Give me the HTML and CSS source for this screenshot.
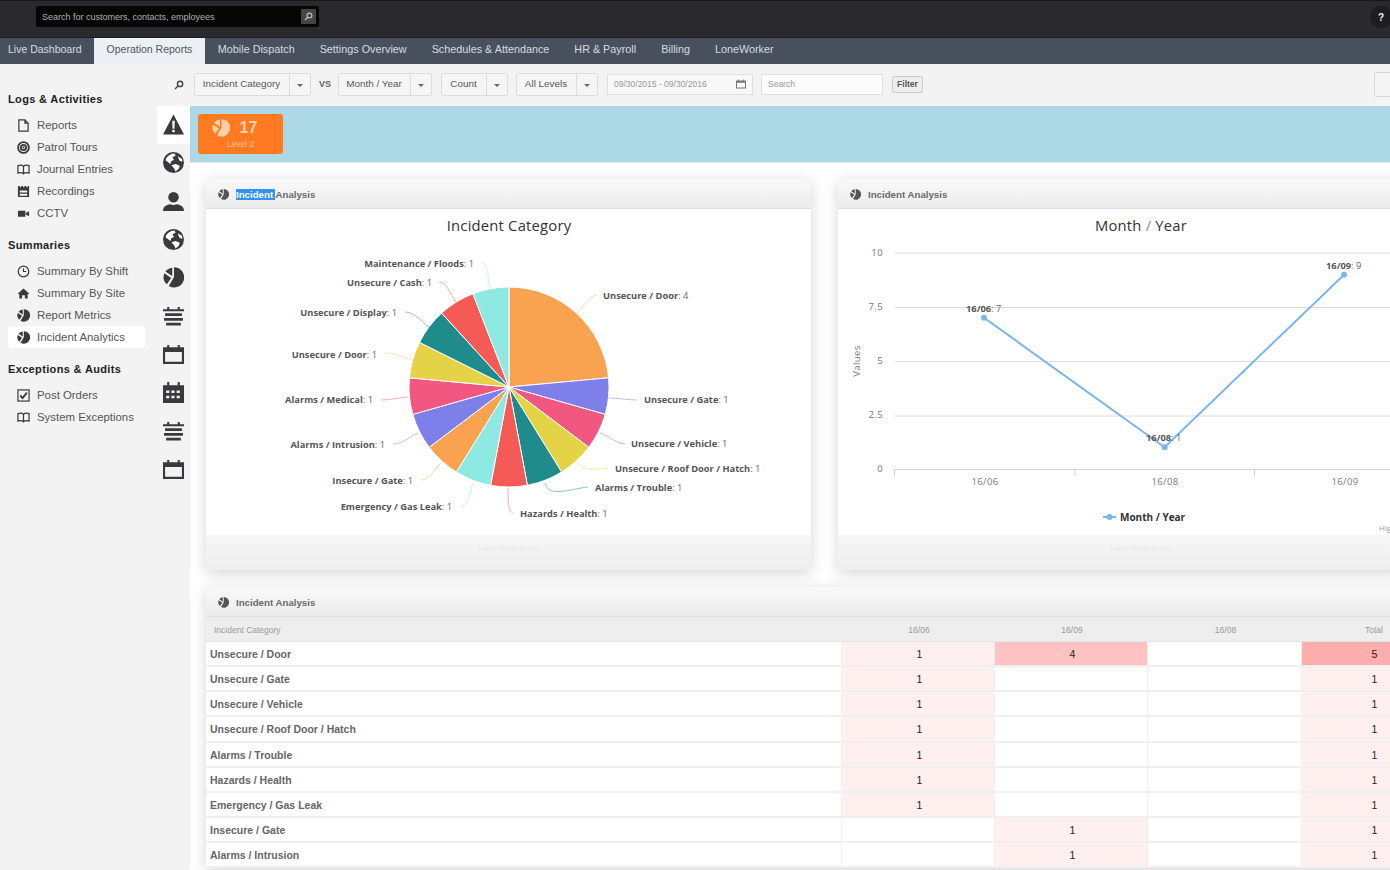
FILE: index.html
```html
<!DOCTYPE html>
<html lang="en">
<head>
<meta charset="utf-8">
<title>Incident Analytics</title>
<link rel="stylesheet" href="styles.css">
</head>
<body>
<svg class="defs" width="0" height="0" aria-hidden="true">
  <symbol id="i-warn" viewBox="0 0 20 20"><path d="M10 .5 20 19.5H0Z"/><path class="cut" d="M8.8 6.5h2.4l-.3 7.5H9.1Z"/><circle class="cut" cx="10" cy="16.2" r="1.3"/></symbol>
  <symbol id="i-globe" viewBox="0 0 20 20"><circle cx="10" cy="10" r="10"/><path class="cut" d="M3 6c2-3 5-4.500 8-4.500l1 2-3 1.500 1.500 2.500-2.500 1-1 3-3-2.500-1.500-1Zm5 6.500 4-1 4 1.500-1 3-3 2.500-1.500-3ZM14 4l4 2.500 .5 3-3-1.500Z"/></symbol>
  <symbol id="i-user" viewBox="0 0 20 20"><circle cx="10" cy="6" r="5"/><path d="M0 19c0-4.500 3.500-6 7-6.500 2 1 4 1 6 0 3.500 .5 7 2 7 6.500Z"/></symbol>
  <symbol id="i-pie" viewBox="0 0 20 20"><path d="M10.500 9.500V.2a9.700 9.700 0 1 1-5 18Z"/><path d="M8.800 8.500V.6A9 9 0 0 0 2.300 4.300Z"/><path d="M7.800 10.500 1.300 6A9.300 9.300 0 0 0 3.700 16.500Z"/></symbol>
  <symbol id="i-stack" viewBox="0 0 20 20"><path d="M4 1h2v2h8V1h2v2h4v2H0V3h4ZM2 7h16v2.500H2ZM1 11.500h18V14H1ZM3 16h14v2.500H3Z"/></symbol>
  <symbol id="i-cal" viewBox="0 0 20 20"><path fill-rule="evenodd" d="M4 1h2v2h8V1h2v2h4v16H0V3h4ZM2 7.500V17h16V7.500Z"/></symbol>
  <symbol id="i-calf" viewBox="0 0 20 20"><path fill-rule="evenodd" d="M4 0h2v3h8V0h2v3h4v17H0V3h4ZM3 8v2.500h3V8Zm5 0v2.500h3V8Zm5 0v2.500h3V8ZM3 13v2.500h3V13Zm5 0v2.500h3V13Zm5 0v2.500h3V13Z"/></symbol>
  <symbol id="i-doc" viewBox="0 0 14 14"><path class="ln" d="M2 1h6.500L12 4.500V13H2Z M8.500 1v3.500H12"/></symbol>
  <symbol id="i-target" viewBox="0 0 14 14"><circle class="ln ln-b" cx="7" cy="7" r="5.800"/><circle class="ln ln-b" cx="7" cy="7" r="2.800"/><circle cx="7" cy="7" r="1"/></symbol>
  <symbol id="i-book" viewBox="0 0 14 14"><path class="ln" d="M7 3.500C6 2.500 3 2 1 2.800V11c2-.7 5-.3 6 .7 1-1 4-1.400 6-.7V2.800C11 2 8 2.500 7 3.500Zm0 0v8"/></symbol>
  <symbol id="i-film" viewBox="0 0 14 14"><path fill-rule="evenodd" d="M1 1h2v1.500h1.500V1h2v1.500H8V1h2v1.500h1.500V1H13v12H1ZM3 6v2h8V6Zm0 3.500V11.500h8V9.500Z"/></symbol>
  <symbol id="i-cam" viewBox="0 0 14 14"><path d="M1 4h8v6.500H1ZM9.500 6.500 13 4.500v5.500L9.500 8Z"/></symbol>
  <symbol id="i-clock" viewBox="0 0 14 14"><circle class="ln" cx="7" cy="7" r="5.700"/><path class="ln" d="M7 3.500V7h3"/></symbol>
  <symbol id="i-home" viewBox="0 0 14 14"><path d="M7 1.500 13.500 7.500H11.500V12.500H8.500V9H5.500V12.500H2.500V7.500H.5Z"/></symbol>
  <symbol id="i-check" viewBox="0 0 14 14"><rect class="ln" x="1" y="1" width="12" height="12"/><path class="ln ln-b" d="M3.500 7 6 9.700 10.700 4"/></symbol>
  <symbol id="i-search" viewBox="0 0 14 14"><circle class="ln ln-b" cx="8.500" cy="5.500" r="3.700"/><path class="ln ln-b" d="M5.500 8.500 1.500 12.500"/></symbol>
</svg>

<header class="topbar">
  <div class="searchbox">
    <span class="searchbox-text">Search for customers, contacts, employees</span>
    <span class="searchbox-btn"><svg class="ic-xs"><use href="#i-search"/></svg></span>
  </div>
  <span class="help">?</span>
</header>

<nav class="nav">
  <a class="tab tab-first">Live Dashboard</a>
  <a class="tab tab-active">Operation Reports</a>
  <a class="tab">Mobile Dispatch</a>
  <a class="tab">Settings Overview</a>
  <a class="tab">Schedules &amp; Attendance</a>
  <a class="tab">HR &amp; Payroll</a>
  <a class="tab">Billing</a>
  <a class="tab">LoneWorker</a>
</nav>

<div class="layout">
  <aside class="sidebar">
    <h3 class="side-h side-h-first">Logs &amp; Activities</h3>
    <a class="side-i"><svg class="ic-s"><use href="#i-doc"/></svg>Reports</a>
    <a class="side-i"><svg class="ic-s"><use href="#i-target"/></svg>Patrol Tours</a>
    <a class="side-i"><svg class="ic-s"><use href="#i-book"/></svg>Journal Entries</a>
    <a class="side-i"><svg class="ic-s"><use href="#i-film"/></svg>Recordings</a>
    <a class="side-i"><svg class="ic-s"><use href="#i-cam"/></svg>CCTV</a>
    <h3 class="side-h">Summaries</h3>
    <a class="side-i"><svg class="ic-s"><use href="#i-clock"/></svg>Summary By Shift</a>
    <a class="side-i"><svg class="ic-s"><use href="#i-home"/></svg>Summary By Site</a>
    <a class="side-i"><svg class="ic-s"><use href="#i-pie"/></svg>Report Metrics</a>
    <a class="side-i side-i-active"><svg class="ic-s"><use href="#i-pie"/></svg>Incident Analytics</a>
    <h3 class="side-h">Exceptions &amp; Audits</h3>
    <a class="side-i"><svg class="ic-s"><use href="#i-check"/></svg>Post Orders</a>
    <a class="side-i"><svg class="ic-s"><use href="#i-book"/></svg>System Exceptions</a>
  </aside>

  <div class="rail">
    <div class="rail-top"><svg class="ic-xs"><use href="#i-search"/></svg></div>
    <div class="rail-i rail-i-active"><svg class="ic-l"><use href="#i-warn"/></svg></div>
    <div class="rail-i"><svg class="ic-l"><use href="#i-globe"/></svg></div>
    <div class="rail-i"><svg class="ic-l"><use href="#i-user"/></svg></div>
    <div class="rail-i"><svg class="ic-l"><use href="#i-globe"/></svg></div>
    <div class="rail-i"><svg class="ic-l"><use href="#i-pie"/></svg></div>
    <div class="rail-i"><svg class="ic-l"><use href="#i-stack"/></svg></div>
    <div class="rail-i"><svg class="ic-l"><use href="#i-cal"/></svg></div>
    <div class="rail-i"><svg class="ic-l"><use href="#i-calf"/></svg></div>
    <div class="rail-i"><svg class="ic-l"><use href="#i-stack"/></svg></div>
    <div class="rail-i"><svg class="ic-l"><use href="#i-cal"/></svg></div>
  </div>

  <main class="main">
    <div class="toolbar">
      <div class="sel sel-a"><span class="sel-l">Incident Category</span><span class="sel-c"></span></div>
      <span class="vs">VS</span>
      <div class="sel sel-b"><span class="sel-l">Month / Year</span><span class="sel-c"></span></div>
      <div class="sel sel-c1"><span class="sel-l">Count</span><span class="sel-c"></span></div>
      <div class="sel sel-d"><span class="sel-l">All Levels</span><span class="sel-c"></span></div>
      <div class="field field-date"><span>09/30/2015 - 09/30/2016</span><svg class="ic-xs ic-mid"><use href="#i-cal"/></svg></div>
      <div class="field field-search"><span>Search</span></div>
      <div class="btn-filter">Filter</div>
      <div class="btn-right"></div>
    </div>

    <div class="band">
      <div class="tile">
        <div class="tile-top"><svg class="ic-tile"><use href="#i-pie"/></svg><span class="tile-n">17</span></div>
        <div class="tile-l">Level 2</div>
      </div>
    </div>

    <div class="content">
      <div class="charts">
        <section class="panel">
          <div class="panel-h"><svg class="ic-p"><use href="#i-pie"/></svg><span><span class="sel-text">Incident </span>Analysis</span></div>
          <svg class="chart" viewBox="206 209 605 326">
            <text class="c-title" x="509" y="231" text-anchor="middle">Incident Category</text>
            <g class="pie">
              <path fill="#f9a350" d="M509 387V287A100 100 0 0 1 608.6 377.8Z"/>
              <path fill="#7f7fea" d="M509 387 608.6 377.800A100 100 0 0 1 605.2 414.400Z"/>
              <path fill="#f15780" d="M509 387 605.200 414.400A100 100 0 0 1 588.800 447.300Z"/>
              <path fill="#e4d344" d="M509 387 588.800 447.300A100 100 0 0 1 561.600 472Z"/>
              <path fill="#1f8b8b" d="M509 387 561.600 472A100 100 0 0 1 527.400 485.300Z"/>
              <path fill="#f65a56" d="M509 387 527.400 485.300A100 100 0 0 1 490.600 485.300Z"/>
              <path fill="#8de9e1" d="M509 387 490.600 485.300A100 100 0 0 1 456.400 472Z"/>
              <path fill="#f9a350" d="M509 387 456.400 472A100 100 0 0 1 429.200 447.300Z"/>
              <path fill="#7f7fea" d="M509 387 429.200 447.300A100 100 0 0 1 412.800 414.400Z"/>
              <path fill="#f15780" d="M509 387 412.800 414.400A100 100 0 0 1 409.400 377.800Z"/>
              <path fill="#e4d344" d="M509 387 409.400 377.800A100 100 0 0 1 419.500 342.400Z"/>
              <path fill="#1f8b8b" d="M509 387 419.500 342.400A100 100 0 0 1 441.600 313.100Z"/>
              <path fill="#f65a56" d="M509 387 441.600 313.100A100 100 0 0 1 472.900 293.800Z"/>
              <path fill="#8de9e1" d="M509 387 472.900 293.800A100 100 0 0 1 509 287Z"/>
            </g>
            <g class="conn">
              <path stroke="#fcd3ab" d="M577 313C585 304 590 296 597 295"/>
              <path stroke="#bfbff4" d="M609 398C618 398 628 400 637 400"/>
              <path stroke="#f8abc0" d="M600 433C610 436 616 444 625 444"/>
              <path stroke="#f1e9a1" d="M577 463C584 472 596 469 608 468"/>
              <path stroke="#8fc5c5" d="M545 483C548 498 570 489 588 487"/>
              <path stroke="#faacaa" d="M508 488C508 500 508 512 513 513"/>
              <path stroke="#c6f4f0" d="M473 483C470 492 468 506 461 506"/>
              <path stroke="#fcd3ab" d="M441 463C434 470 429 480 421 480"/>
              <path stroke="#bfbff4" d="M418 433C409 437 402 444 393 444"/>
              <path stroke="#f8abc0" d="M408 397C398 398 390 400 381 400"/>
              <path stroke="#f1e9a1" d="M412 360C403 357 394 353 385 353"/>
              <path stroke="#8fc5c5" d="M428 327C421 320 413 312 405 312"/>
              <path stroke="#faacaa" d="M456 302C450 293 446 282 439 282"/>
              <path stroke="#c6f4f0" d="M490 289C488 280 488 263 482 263"/>
            </g>
            <g class="plabels">
              <text x="474" y="267" text-anchor="end"><tspan class="b">Maintenance / Floods</tspan>: 1</text>
              <text x="432" y="286" text-anchor="end"><tspan class="b">Unsecure / Cash</tspan>: 1</text>
              <text x="397" y="316" text-anchor="end"><tspan class="b">Unsecure / Display</tspan>: 1</text>
              <text x="377" y="358" text-anchor="end"><tspan class="b">Unsecure / Door</tspan>: 1</text>
              <text x="373" y="403" text-anchor="end"><tspan class="b">Alarms / Medical</tspan>: 1</text>
              <text x="385" y="448" text-anchor="end"><tspan class="b">Alarms / Intrusion</tspan>: 1</text>
              <text x="413" y="484" text-anchor="end"><tspan class="b">Insecure / Gate</tspan>: 1</text>
              <text x="452" y="510" text-anchor="end"><tspan class="b">Emergency / Gas Leak</tspan>: 1</text>
              <text x="520" y="517"><tspan class="b">Hazards / Health</tspan>: 1</text>
              <text x="595" y="491"><tspan class="b">Alarms / Trouble</tspan>: 1</text>
              <text x="615" y="472"><tspan class="b">Unsecure / Roof Door / Hatch</tspan>: 1</text>
              <text x="631" y="447"><tspan class="b">Unsecure / Vehicle</tspan>: 1</text>
              <text x="644" y="403"><tspan class="b">Unsecure / Gate</tspan>: 1</text>
              <text x="603" y="299"><tspan class="b">Unsecure / Door</tspan>: 4</text>
            </g>
          </svg>
          <div class="panel-f">Load Time: 0 sec</div>
        </section>

        <section class="panel">
          <div class="panel-h"><svg class="ic-p"><use href="#i-pie"/></svg><span>Incident Analysis</span></div>
          <svg class="chart" viewBox="838 209 605 326">
            <text class="c-title" x="1141" y="231" text-anchor="middle">Month <tspan class="slash">/</tspan> Year</text>
            <g class="grid">
              <path d="M895 253H1443M895 307.500H1443M895 361.500H1443M895 416H1443"/>
            </g>
            <path class="axis" d="M894 469.500H1435M894.500 470V476M1075 470V476M1254.500 470V476M1434.500 470V476"/>
            <g class="ticks">
              <text x="883" y="256" text-anchor="end">10</text>
              <text x="883" y="310" text-anchor="end">7.5</text>
              <text x="883" y="364" text-anchor="end">5</text>
              <text x="883" y="418" text-anchor="end">2.5</text>
              <text x="883" y="472" text-anchor="end">0</text>
              <text x="985" y="485" text-anchor="middle">16/06</text>
              <text x="1165" y="485" text-anchor="middle">16/08</text>
              <text x="1345" y="485" text-anchor="middle">16/09</text>
              <text x="860" y="361" text-anchor="middle" transform="rotate(-90 860 361)">Values</text>
            </g>
            <path class="series" d="M984 317.700 1164.600 447.300 1344 274.700"/>
            <circle class="dot" cx="984" cy="317.700" r="3"/>
            <circle class="dot" cx="1164.600" cy="447.300" r="3"/>
            <circle class="dot" cx="1344" cy="274.700" r="3"/>
            <g class="plabels">
              <text x="966" y="312"><tspan class="b">16/06</tspan>: 7</text>
              <text x="1146" y="441"><tspan class="b">16/08</tspan>: 1</text>
              <text x="1326" y="269"><tspan class="b">16/09</tspan>: 9</text>
            </g>
            <path class="series" d="M1103 517H1116"/>
            <circle class="dot" cx="1109.500" cy="517" r="3"/>
            <text class="legend" x="1120" y="520.500">Month / Year</text>
            <text class="credit" x="1379" y="531">Highcharts.com</text>
          </svg>
          <div class="panel-f">Load Time: 0 sec</div>
        </section>
      </div>

      <section class="panel panel-table">
        <div class="panel-h"><svg class="ic-p"><use href="#i-pie"/></svg><span>Incident Analysis</span></div>
        <div class="thead">
          <span class="th th-first">Incident Category</span><span class="th">16/06</span><span class="th">16/09</span><span class="th">16/08</span><span class="th">Total</span>
        </div>
        <div class="tr"><span class="td-n">Unsecure / Door</span><span class="td lo">1</span><span class="td mid">4</span><span class="td"></span><span class="td hi">5</span></div>
        <div class="tr"><span class="td-n">Unsecure / Gate</span><span class="td lo">1</span><span class="td"></span><span class="td"></span><span class="td lo">1</span></div>
        <div class="tr"><span class="td-n">Unsecure / Vehicle</span><span class="td lo">1</span><span class="td"></span><span class="td"></span><span class="td lo">1</span></div>
        <div class="tr"><span class="td-n">Unsecure / Roof Door / Hatch</span><span class="td lo">1</span><span class="td"></span><span class="td"></span><span class="td lo">1</span></div>
        <div class="tr"><span class="td-n">Alarms / Trouble</span><span class="td lo">1</span><span class="td"></span><span class="td"></span><span class="td lo">1</span></div>
        <div class="tr"><span class="td-n">Hazards / Health</span><span class="td lo">1</span><span class="td"></span><span class="td"></span><span class="td lo">1</span></div>
        <div class="tr"><span class="td-n">Emergency / Gas Leak</span><span class="td lo">1</span><span class="td"></span><span class="td"></span><span class="td lo">1</span></div>
        <div class="tr"><span class="td-n">Insecure / Gate</span><span class="td"></span><span class="td lo">1</span><span class="td"></span><span class="td lo">1</span></div>
        <div class="tr"><span class="td-n">Alarms / Intrusion</span><span class="td"></span><span class="td lo">1</span><span class="td"></span><span class="td lo">1</span></div>
      </section>
    </div>
  </main>
</div>
</body>
</html>
```
FILE: styles.css
```css
* { box-sizing: border-box; }
html, body { margin: 0; width: 1390px; height: 870px; overflow: hidden; }
body { font-family: "Liberation Sans", Arial, sans-serif; background: #f3f3f3; color: #555; }
.defs { position: absolute; }
.cut { fill: #fff; }
.ln { fill: none; stroke: currentColor; stroke-width: 1.3; }
.ln-b { stroke-width: 2; }

.ic-xs { width: 12px; height: 12px; display: block; fill: #444; color: #444; }
.ic-s { width: 13px; height: 13px; flex: none; margin-right: 7px; fill: #3a3a3e; color: #3a3a3e; }
.ic-l { width: 21px; height: 21px; display: block; fill: #3a3a3e; }
.ic-p { width: 11px; height: 11px; flex: none; fill: #555; }
.ic-mid { fill: #777; color: #777; }
.ic-tile { width: 18px; height: 18px; fill: #ffcfa8; }

/* top */
.topbar { height: 38px; background: #29292e; border-top: 1px solid #18181a; border-bottom: 1px solid #1c1c1f; display: flex; align-items: flex-start; justify-content: space-between; padding: 5px 0 0 36px; }
.searchbox { width: 283px; height: 21px; background: #060607; border-radius: 2px; display: flex; align-items: center; justify-content: space-between; padding: 0 3px 0 6px; }
.searchbox-text { font-size: 9px; color: #b0b0b0; }
.searchbox-btn { width: 15px; height: 15px; background: #454545; border-radius: 1px; display: flex; align-items: center; justify-content: center; }
.searchbox-btn .ic-xs { width: 9px; height: 9px; color: #bbb; }
.help { width: 22px; height: 22px; border-radius: 50%; background: #1d1d20; color: #eee; font-size: 10px; font-weight: bold; display: flex; align-items: center; justify-content: center; margin: 0 -2px 0 0; }

.nav { height: 26px; background: #47505c; display: flex; }
.tab { padding: 0 12.5px; font-size: 10.800px; line-height: 23px; color: #d8dce0; white-space: nowrap; }
.tab-first { padding: 0 12px 0 8px; font-size: 10.500px; }
.tab-active { background: #ecf0f5; color: #4d5662; padding: 0 13px; font-size: 10.500px; }

.layout { display: flex; height: 806px; }

/* sidebar */
.sidebar { width: 157px; flex: none; padding: 0 12px 0 8px; display: flex; flex-direction: column; }
.side-h { margin: 14px 0 7px; font-size: 11px; line-height: 15px; color: #222; font-weight: bold; letter-spacing: .35px; white-space: nowrap; }
.side-h-first { margin-top: 28px; }
.side-i { height: 22px; display: flex; align-items: center; padding-left: 9px; font-size: 11.400px; color: #555; white-space: nowrap; border-radius: 4px; }
.side-i-active { background: #fff; }

/* rail */
.rail { width: 33px; flex: none; }
.rail-top { height: 42px; display: flex; align-items: center; justify-content: center; padding-left: 10px; }
.rail-top .ic-xs { width: 10px; height: 10px; }
.rail-i { height: 38.300px; display: flex; align-items: center; justify-content: center; padding-bottom: 1px; }
.rail-i-active { background: #fff; }

/* toolbar */
.main { width: 1254px; flex: none; background: #fff; }
.toolbar { height: 42px; padding-left: 4px; display: flex; align-items: center; background: #f3f3f3; gap: 8px; padding-bottom: 2px; }
.sel { height: 23px; display: flex; background: #f5f5f5; border: 1px solid #dcdcdc; border-radius: 2px; font-size: 9.900px; color: #555; }
.sel-l { flex: 1; display: flex; align-items: center; justify-content: center; white-space: nowrap; padding: 0 1px 1px 0; }
.sel-c { width: 21px; flex: none; border-left: 1px solid #dcdcdc; position: relative; }
.sel-c::after { content: ""; position: absolute; left: 7px; top: 10px; border: 3px solid transparent; border-top: 3px solid #666; }
.sel-a { width: 117px; }
.sel-b { width: 94px; }
.sel-c1 { width: 67px; margin-left: 1px; }
.sel-d { width: 82px; }
.vs { font-size: 9px; color: #666; font-weight: bold; width: 12px; margin-right: -1px; }
.field { height: 21px; background: #f8f8f8; border: 1px solid #e0e0e0; font-size: 8.500px; color: #999; display: flex; align-items: center; justify-content: space-between; padding: 0 6px; }
.field-date { width: 146px; margin-left: 1px; }
.field-date .ic-xs { width: 10px; height: 10px; }
.field-search { width: 122px; background: #fcfcfc; }
.btn-filter { width: 31px; height: 17px; margin-left: 1px; background: #eee; border: 1px solid #ccc; border-radius: 2px; font-size: 8.500px; font-weight: bold; color: #555; display: flex; align-items: center; justify-content: center; }
.btn-right { width: 70px; height: 25px; margin-left: auto; background: #f5f5f5; border: 1px solid #d8d8d8; border-radius: 2px; }

/* band */
.band { height: 57px; background: #add8e6; padding: 8px 0 0 8px; border-bottom: 1px solid #e4e4e4; }
.tile { width: 85px; height: 40px; background: #ff7a20; border-radius: 3px; display: flex; flex-direction: column; align-items: center; padding-top: 4px; }
.tile-top { display: flex; align-items: center; gap: 10px; height: 19px; margin-left: -12px; }
.tile-n { font-size: 16px; font-weight: bold; color: #ffd2ae; }
.tile-l { font-size: 8.500px; color: #ffc49c; margin-top: 2px; }

/* panels */
.content { padding: 16px 0 0 16px; }
.charts { display: grid; grid-template-columns: 605px 605px; column-gap: 27px; margin-bottom: 17px; }
.panel { background: #fff; box-shadow: 0 3px 14px rgba(0,0,0,.17); display: flex; flex-direction: column; }
.panel-h { height: 30px; flex: none; display: flex; align-items: center; gap: 7px; padding: 2px 0 0 12px; background: linear-gradient(#f9f9f9, #ececec); border-bottom: 1px solid #dedede; font-size: 9.700px; font-weight: bold; color: #6a6a6a; white-space: pre; }
.sel-text { background: #3390ff; color: #fff; }
.chart { width: 605px; height: 326px; display: block; flex: none; }
.panel-f { height: 35px; flex: none; background: linear-gradient(#f6f6f6, #eeeeee); font-size: 8px; color: #e8e8e8; text-align: center; line-height: 28px; }

.c-title { font-family: "Open Sans", sans-serif; font-size: 14.800px; fill: #333; letter-spacing: .2px; }
.slash { fill: #888; }
.plabels text { font-family: "Open Sans", sans-serif; font-size: 9.300px; fill: #666; }
.plabels .b { font-weight: 700; fill: #555; }
.pie path { stroke: #fff; stroke-width: 1; }
.conn path { fill: none; stroke-width: 1; }
.grid path { fill: none; stroke: #dcdcdc; stroke-width: 1; }
.axis { fill: none; stroke: #c6d5e5; stroke-width: 1; }
.ticks text { font-family: "Open Sans", sans-serif; font-size: 9.500px; fill: #777; letter-spacing: .4px; }
.series { fill: none; stroke: #7cb5ec; stroke-width: 2; }
.dot { fill: #7cb5ec; }
.legend { font-family: "Open Sans", sans-serif; font-size: 10px; font-weight: 700; fill: #333; }
.credit { font-family: "Open Sans", sans-serif; font-size: 8px; fill: #999; }

/* table */
.panel-table { width: 1238px; }
.thead, .tr { display: grid; grid-template-columns: 635px 153px 153px 154px 143px; }
.thead { height: 25px; background: #eeeeee; align-items: center; border-bottom: 1px solid #e4e4e4; padding-top: 2px; }
.th { font-size: 8.500px; color: #999; text-align: center; padding-left: 3px; }
.th-first { text-align: left; padding-left: 8px; }
.tr { height: 25.125px; background: #fff; }
.td-n, .td { border-bottom: 2px solid #f0f0f0; display: flex; align-items: center; font-size: 10.500px; padding-top: 1px; }
.td-n { padding-left: 4px; font-weight: bold; color: #666; }
.td { justify-content: center; color: #222; border-left: 1px solid #f0f0f0; padding-left: 3px; }
.lo { background: #fff0ef; }
.mid { background: #ffc2c2; }
.hi { background: #ffaeae; }
```
